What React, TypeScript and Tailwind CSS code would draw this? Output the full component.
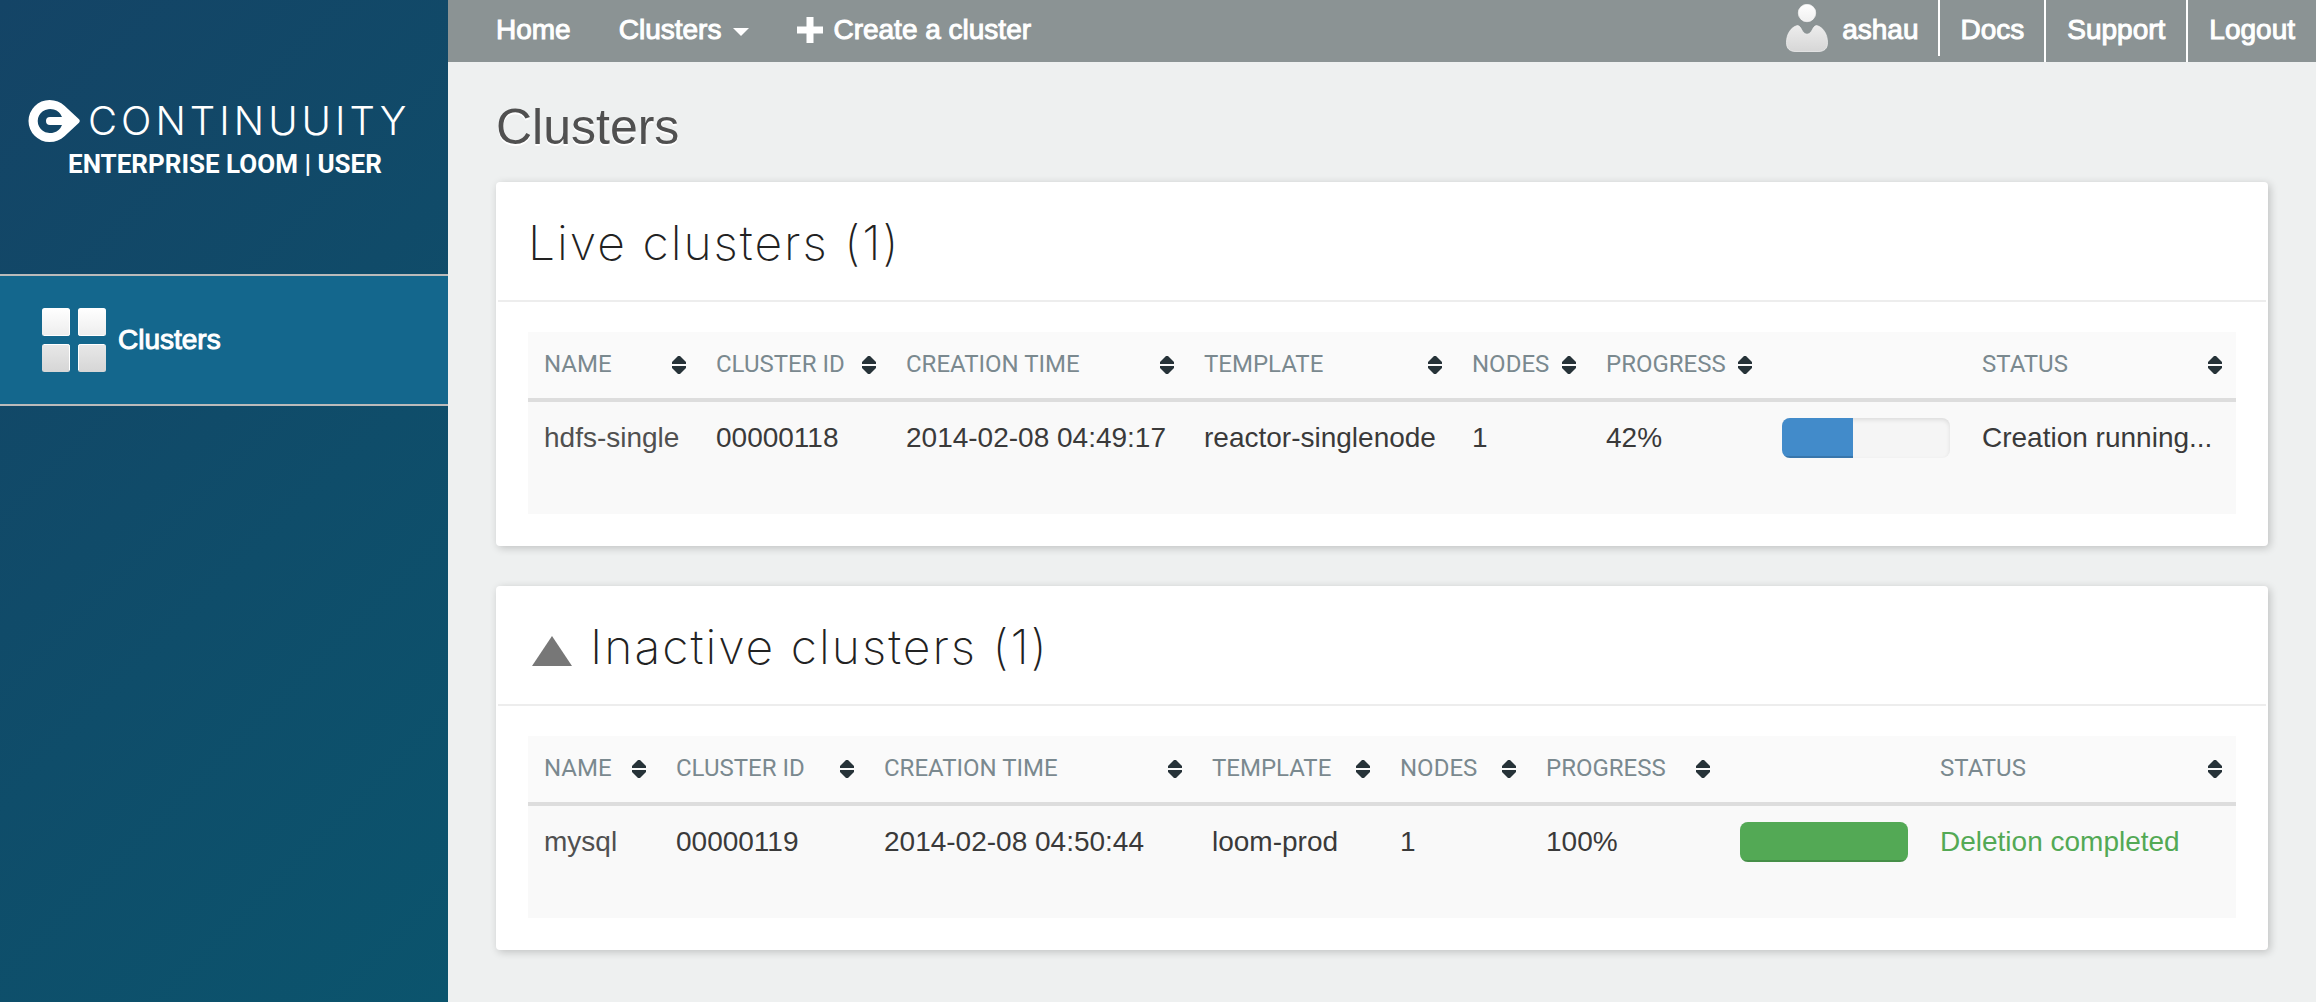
import React from "react";

type Column = { label: string; width: string };

type Cluster = {
  name: string;
  id: string;
  created: string;
  template: string;
  nodes: number;
  progress: number;
  status: string;
  done: boolean;
};

const liveColumns: Column[] = [
  { label: "Name", width: "w-[172px]" },
  { label: "Cluster ID", width: "w-[190px]" },
  { label: "Creation time", width: "w-[298px]" },
  { label: "Template", width: "w-[268px]" },
  { label: "Nodes", width: "w-[134px]" },
  { label: "Progress", width: "w-[176px]" },
  { label: "", width: "w-[200px]" },
  { label: "Status", width: "w-[270px]" },
];

const inactiveColumns: Column[] = [
  { label: "Name", width: "w-[132px]" },
  { label: "Cluster ID", width: "w-[208px]" },
  { label: "Creation time", width: "w-[328px]" },
  { label: "Template", width: "w-[188px]" },
  { label: "Nodes", width: "w-[146px]" },
  { label: "Progress", width: "w-[194px]" },
  { label: "", width: "w-[200px]" },
  { label: "Status", width: "w-[312px]" },
];

const live: Cluster[] = [
  {
    name: "hdfs-single",
    id: "00000118",
    created: "2014-02-08 04:49:17",
    template: "reactor-singlenode",
    nodes: 1,
    progress: 42,
    status: "Creation running...",
    done: false,
  },
];

const inactive: Cluster[] = [
  {
    name: "mysql",
    id: "00000119",
    created: "2014-02-08 04:50:44",
    template: "loom-prod",
    nodes: 1,
    progress: 100,
    status: "Deletion completed",
    done: true,
  },
];

function SortIcon() {
  return (
    <svg className="mt-[2px] shrink-0" width="14" height="18" viewBox="0 0 14 18" fill="#263238" aria-hidden="true">
      <path d="M6 0H8L14 6V8H0V6Z" />
      <path d="M0 10H14V12L8 18H6L0 12Z" />
    </svg>
  );
}

function LogoMark() {
  return (
    <svg width="52" height="42" viewBox="0 0 52 42" aria-hidden="true">
      <path
        fill="#fff"
        fillRule="evenodd"
        d="M21.500 0C27.500 0 32.500 2.200 36.500 5.800L51 19.300Q52.500 21 51 22.700L36.500 36.200C32.500 39.800 27.500 42 21.500 42A21 21 0 0 1 21.500 0ZM34 17A12.500 12 0 1 0 34 25H22A4 4 0 0 1 22 17Z"
      />
    </svg>
  );
}

function GridIcon() {
  return (
    <svg width="64" height="64" viewBox="0 0 64 64" aria-hidden="true">
      <defs>
        <linearGradient id="tiles" x1="0" y1="0" x2="0" y2="64" gradientUnits="userSpaceOnUse">
          <stop offset="0" stopColor="#fff" />
          <stop offset="1" stopColor="#d6d6d6" />
        </linearGradient>
      </defs>
      <g fill="url(#tiles)">
        <rect width="28" height="28" rx="2.500" />
        <rect x="36" width="28" height="28" rx="2.500" />
        <rect y="36" width="28" height="28" rx="2.500" />
        <rect x="36" y="36" width="28" height="28" rx="2.500" />
      </g>
      <g fill="none" stroke="#fff">
        <path d="M27.500 2V25.500Q27.500 27.500 25.500 27.500H2M36.500 2V25.500Q36.500 27.500 38.500 27.500H62M27.500 62V38.500Q27.500 36.500 25.500 36.500H2M36.500 62V38.500Q36.500 36.500 38.500 36.500H62" />
      </g>
    </svg>
  );
}

function UserIcon() {
  return (
    <svg width="42" height="48" viewBox="0 0 42 48" aria-hidden="true">
      <defs>
        <linearGradient id="person" x1="0" y1="0" x2="0" y2="48" gradientUnits="userSpaceOnUse">
          <stop offset="0" stopColor="#fff" />
          <stop offset="1" stopColor="#d6d6d6" />
        </linearGradient>
      </defs>
      <g fill="url(#person)" stroke="#f5f5f5" strokeOpacity=".7">
        <ellipse cx="21" cy="9" rx="8.700" ry="8.700" />
        <path d="M11.500 21.500C5 23 .5 30 .5 38.500C.5 45 4 47.500 10 47.500H32C38 47.500 41.500 45 41.500 38.500C41.500 30 37 23 30.500 21.500C27.500 22 27 25 25 28Q21 32.500 17 28C15 25 14.500 22 11.500 21.500Z" />
      </g>
    </svg>
  );
}

function ClusterTable({ label, columns, rows }: { label: string; columns: Column[]; rows: Cluster[] }) {
  return (
    <table aria-label={label} className="w-full table-fixed bg-[#fafafa] text-left text-[28px] leading-10 text-[#3a3a3a]">
      <colgroup>
        {columns.map((c, i) => (
          <col key={i} className={c.width} />
        ))}
      </colgroup>
      <thead>
        <tr className="h-[68px] border-b-4 border-[#dddddd]">
          {columns.map((c, i) => (
            <th key={i} scope="col" className="p-0 pr-[14px] pb-[2px] pl-4 font-normal">
              {c.label && (
                <button
                  type="button"
                  className="flex w-full items-center justify-between font-[Roboto,sans-serif] text-[24px] leading-8 whitespace-nowrap text-[#7a898f] uppercase"
                >
                  {c.label}
                  <SortIcon />
                </button>
              )}
            </th>
          ))}
        </tr>
      </thead>
      <tbody>
        {rows.map((r) => (
          <tr key={r.id} className="h-[114px] bg-[#f9f9f9] align-top whitespace-nowrap">
            <td className="pt-4 pl-4">
              <a href="#cluster" className="text-[#505050]">{r.name}</a>
            </td>
            <td className="pt-4 pl-4">{r.id}</td>
            <td className="pt-4 pl-4">{r.created}</td>
            <td className="pt-4 pl-4">{r.template}</td>
            <td className="pt-4 pl-4">{r.nodes}</td>
            <td className="pt-4 pl-4">{r.progress}%</td>
            <td className="px-4 pt-4">
              <div
                role="progressbar"
                aria-label={r.name + " progress"}
                aria-valuenow={r.progress}
                aria-valuemin={0}
                aria-valuemax={100}
                className="h-10 overflow-hidden rounded-lg bg-[#f5f5f5] shadow-[inset_0_2px_4px_rgba(0,0,0,0.1)]"
              >
                <div
                  className={
                    r.done
                      ? "h-full bg-[#53a955] shadow-[inset_0_-2px_0_rgba(0,0,0,0.15)]"
                      : "h-full bg-[#428bca] shadow-[inset_0_-2px_0_rgba(0,0,0,0.15)]"
                  }
                  style={{ width: `${r.progress}%` }}
                />
              </div>
            </td>
            <td className={r.done ? "pt-4 pl-4 text-[#53a955]" : "pt-4 pl-4"}>{r.status}</td>
          </tr>
        ))}
      </tbody>
    </table>
  );
}

function Panel({ children }: { children: React.ReactNode }) {
  return (
    <section className="rounded bg-white shadow-[2px_2px_8px_rgba(0,0,0,0.2)]">
      {children}
    </section>
  );
}

const panelHeading =
  "mx-[2px] flex h-[120px] items-center border-b-2 border-[#ededed] px-[30px] pt-1 font-[Inter,sans-serif] text-[48px] leading-[56px] font-extralight tracking-[2px] text-[#222]";

export default function App() {
  return (
    <div className="flex min-h-screen bg-[#eef0f0] font-['Liberation_Sans',Arial,sans-serif] text-[28px] leading-10">
      <aside className="w-[448px] shrink-0 bg-[linear-gradient(135deg,#144466,#0b546d)] text-white">
        <div className="flex h-[274px] flex-col pt-[98px] pl-7">
          <div className="flex items-center gap-[8px] font-[Inter,sans-serif] text-[40px] leading-[46px] font-light tracking-[4px] whitespace-nowrap">
            <LogoMark />
            CONTINUUITY
          </div>
          <p className="pl-10 font-[Roboto,sans-serif] text-[26px] leading-10 font-bold whitespace-nowrap">
            ENTERPRISE LOOM | USER
          </p>
        </div>
        <nav aria-label="Sections">
          <a
            href="#clusters"
            className="flex h-[132px] items-center gap-3 border-y-2 border-[#bbbbbb] bg-[#14678d] pl-[42px] [-webkit-text-stroke:1px_white]"
          >
            <GridIcon />
            Clusters
          </a>
        </nav>
      </aside>

      <div className="flex min-w-0 flex-1 flex-col">
        <header className="flex h-[62px] items-start justify-between bg-[#8b9394] pl-12 text-white [-webkit-text-stroke:1px_white]">
          <nav aria-label="Main" className="flex h-[60px] items-center gap-12">
            <a href="#home">Home</a>
            <button type="button" className="flex items-center gap-3">
              Clusters
              <svg className="mt-1" width="16" height="8" viewBox="0 0 16 8" fill="#fff" aria-hidden="true">
                <path d="M0 0H16L8 8Z" />
              </svg>
            </button>
            <a href="#create" className="flex items-center gap-[10px]">
              <svg width="26" height="26" viewBox="0 0 26 26" fill="#fff" aria-hidden="true">
                <path d="M9.500 0H16.500V9.500H26V16.500H16.500V26H9.500V16.500H0V9.500H9.500Z" />
              </svg>
              Create a cluster
            </a>
          </nav>
          <nav aria-label="Account" className="flex">
            <a href="#profile" className="flex h-14 items-center gap-[14px] pr-5">
              <UserIcon />
              <span className="pt-1">ashau</span>
            </a>
            <a href="#docs" className="flex h-14 items-center border-l-2 border-white px-5 pt-1">Docs</a>
            <a href="#support" className="flex h-[62px] items-center border-l-2 border-white px-[21px] pb-[2px]">Support</a>
            <a href="#logout" className="flex h-[62px] items-center border-l-2 border-white px-[21px] pb-[2px]">Logout</a>
          </nav>
        </header>

        <main className="px-12 pb-[52px]">
          <h1 className="flex h-[120px] items-center pt-[10px] text-[50px] leading-[60px] text-[#505050] [text-shadow:0_2px_0_white]">
            Clusters
          </h1>
          <div className="flex flex-col gap-10">
            <Panel>
              <h2 className={panelHeading}>Live clusters (1)</h2>
              <div className="px-8 pt-[30px] pb-8">
                <ClusterTable label="Live clusters" columns={liveColumns} rows={live} />
              </div>
            </Panel>
            <Panel>
              <h2 className={panelHeading}>
                <button type="button" className="flex items-center gap-[18px] pl-1">
                  <svg className="mt-2" width="40" height="30" viewBox="0 0 40 30" fill="#777" aria-hidden="true">
                    <path d="M20 0 40 30H0Z" />
                  </svg>
                  Inactive clusters (1)
                </button>
              </h2>
              <div className="px-8 pt-[30px] pb-8">
                <ClusterTable label="Inactive clusters" columns={inactiveColumns} rows={inactive} />
              </div>
            </Panel>
          </div>
        </main>
      </div>
    </div>
  );
}
